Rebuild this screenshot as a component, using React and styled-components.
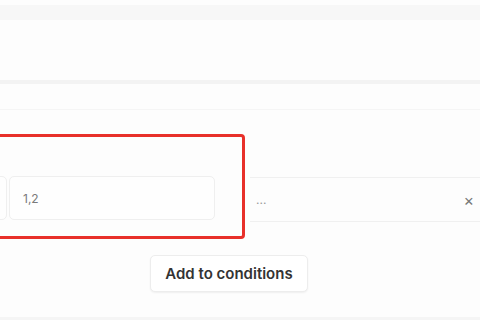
import React from "react";
import styled, { createGlobalStyle } from "styled-components";

const Global = createGlobalStyle`
  html, body { margin: 0; padding: 0; background: #fdfdfd; overflow: hidden; }
  body { font-family: Inter, "Liberation Sans", Arial, sans-serif; }
`;

const Page = styled.div`
  width: 480px;
  height: 320px;
  display: flex;
  flex-direction: column;
  background: #fdfdfd;
  overflow: hidden;
`;

const TopBand = styled.div`
  margin-top: 5px;
  height: 15px;
  background: #f7f7f7;
`;

const Section = styled.div`
  height: ${(p) => p.h}px;
  background: #fdfdfd;
  border-bottom: ${(p) => p.line || "none"};
`;

const Row = styled.div`
  display: flex;
  align-items: flex-start;
  margin-top: 24px;
  margin-left: -60px;
  margin-right: -20px;
  gap: 5px;
`;

const RedBox = styled.div`
  width: 305px;
  height: 105px;
  box-sizing: border-box;
  border: 3px solid #e8302a;
  border-radius: 4px;
  display: flex;
  align-items: flex-end;
  padding: 0 27px 16px 0;
  gap: 2px;
  flex-shrink: 0;
`;

const Input = styled.div`
  height: 44px;
  box-sizing: border-box;
  border: 1px solid #efefef;
  border-radius: 5px;
  background: #fefefe;
  display: flex;
  align-items: center;
  padding: 0 13px;
  font-size: 12px;
  color: #7a7a7a;
  width: ${(p) => (p.w ? `${p.w}px` : "auto")};
  flex: ${(p) => (p.w ? "0 0 auto" : "1")};
`;

const Field = styled.div`
  flex: 1;
  margin-top: 43px;
  height: 45px;
  box-sizing: border-box;
  border-top: 1px solid #f0f0f0;
  border-bottom: 1px solid #f0f0f0;
  display: flex;
  align-items: center;
  padding: 0 26px 0 6px;
  font-size: 12px;
  color: #999;
  justify-content: space-between;
`;

const Close = styled.span`
  font-size: 16px;
  color: #777;
  line-height: 1;
`;

const Button = styled.button`
  margin: 16px 0 0 150px;
  width: 158px;
  height: 37px;
  border: 1px solid #ededed;
  border-radius: 5px;
  background: #fff;
  box-shadow: 0 1px 2px rgba(0,0,0,0.06);
  font-family: Inter, "Liberation Sans", Arial, sans-serif;
  font-size: 15px;
  font-weight: 600;
  color: #333;
  padding: 0;
`;

const BottomLine = styled.div`
  margin-top: auto;
  height: 3px;
  background: #f5f5f5;
`;

export default function App() {
  return (
    <Page>
      <Global />
      <TopBand />
      <Section h={60} line="4px solid #f3f3f3" />
      <Section h={25} line="1px solid #f5f5f5" />
      <Row>
        <RedBox>
          <Input w={64} />
          <Input>1,2</Input>
        </RedBox>
        <Field>
          <span>...</span>
          <Close>×</Close>
        </Field>
      </Row>
      <Button>Add to conditions</Button>
      <BottomLine />
    </Page>
  );
}
